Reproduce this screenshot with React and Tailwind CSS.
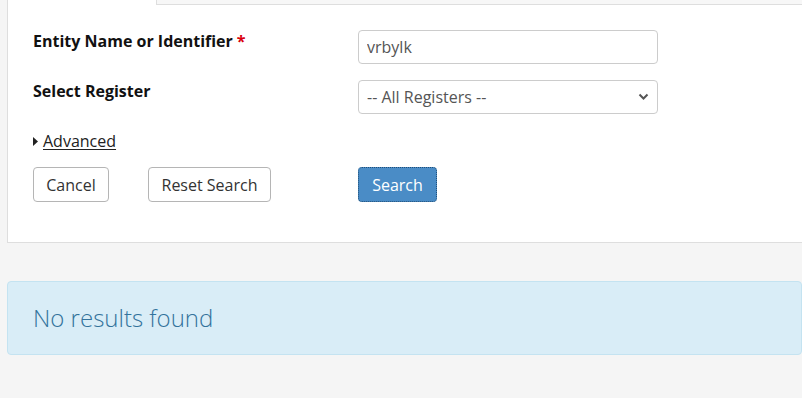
import { useState } from 'react';

function FieldRow({ label, required, children }) {
  return (
    <div className="flex items-start">
      <label className="w-[325px] shrink-0 text-[16px] font-bold leading-[22px] text-[#111]">
        {label}
        {required ? <span className="ml-1 text-[#d9000d]">*</span> : null}
      </label>
      {children}
    </div>
  );
}

export default function App() {
  const [name, setName] = useState('vrbylk');

  return (
    <div className="h-[398px] w-full overflow-hidden bg-[#f5f5f5] pl-[7px] font-['Open_Sans',sans-serif]">
      <section className="border-b border-l border-[#dedede] bg-white">
        <div className="flex h-[5px]">
          <div className="w-[148px] bg-white" />
          <div className="flex-1 border-b border-l border-[#dedede] bg-[#f7f7f7]" />
        </div>

        <div className="flex flex-col pb-[40px] pl-[25px] pt-[25px]">
          <FieldRow label="Entity Name or Identifier" required>
            <input
              value={name}
              onChange={(e) => setName(e.target.value)}
              className="h-[34px] w-[300px] rounded border border-[#cccccc] px-2 text-[16px] text-[#555] outline-none"
            />
          </FieldRow>

          <div className="mt-4">
            <FieldRow label="Select Register">
              <div className="relative w-[300px]">
                <select className="h-[34px] w-full appearance-none rounded border border-[#cccccc] bg-white px-2 text-[16px] text-[#555] outline-none">
                  <option>-- All Registers --</option>
                </select>
                <svg
                  className="pointer-events-none absolute right-[9px] top-[13px]"
                  width="11"
                  height="8"
                  viewBox="0 0 11 8"
                >
                  <path d="M1.5 1.5 L5.5 5.5 L9.5 1.5" fill="none" stroke="#555" strokeWidth="2" />
                </svg>
              </div>
            </FieldRow>
          </div>

          <div className="mt-4 flex h-[22px] items-center gap-[5px] text-[16px] text-[#222]">
            <svg width="5" height="9" viewBox="0 0 5 9">
              <path d="M0 0 L5 4.5 L0 9 Z" fill="#222" />
            </svg>
            <a href="#" className="underline underline-offset-2">
              Advanced
            </a>
          </div>

          <div className="mt-[15px] flex items-center">
            <button
              type="button"
              className="h-[35px] w-[76px] rounded border border-[#b5b5b5] bg-white text-[16px] text-[#333]"
            >
              Cancel
            </button>
            <button
              type="button"
              className="ml-[39px] h-[35px] w-[123px] rounded border border-[#b5b5b5] bg-white text-[16px] text-[#333]"
            >
              Reset Search
            </button>
            <button
              type="button"
              className="ml-[87px] h-[35px] w-[79px] rounded border border-dotted border-[#1f4f7a] bg-[#4a8cc6] text-[16px] text-white"
            >
              Search
            </button>
          </div>
        </div>
      </section>

      <div className="mt-[38px] flex h-[74px] items-center rounded border border-[#c4e3f1] bg-[#d9edf7] pl-[25px]">
        <p className="text-[24px] font-light text-[#33739c]">No results found</p>
      </div>
    </div>
  );
}
